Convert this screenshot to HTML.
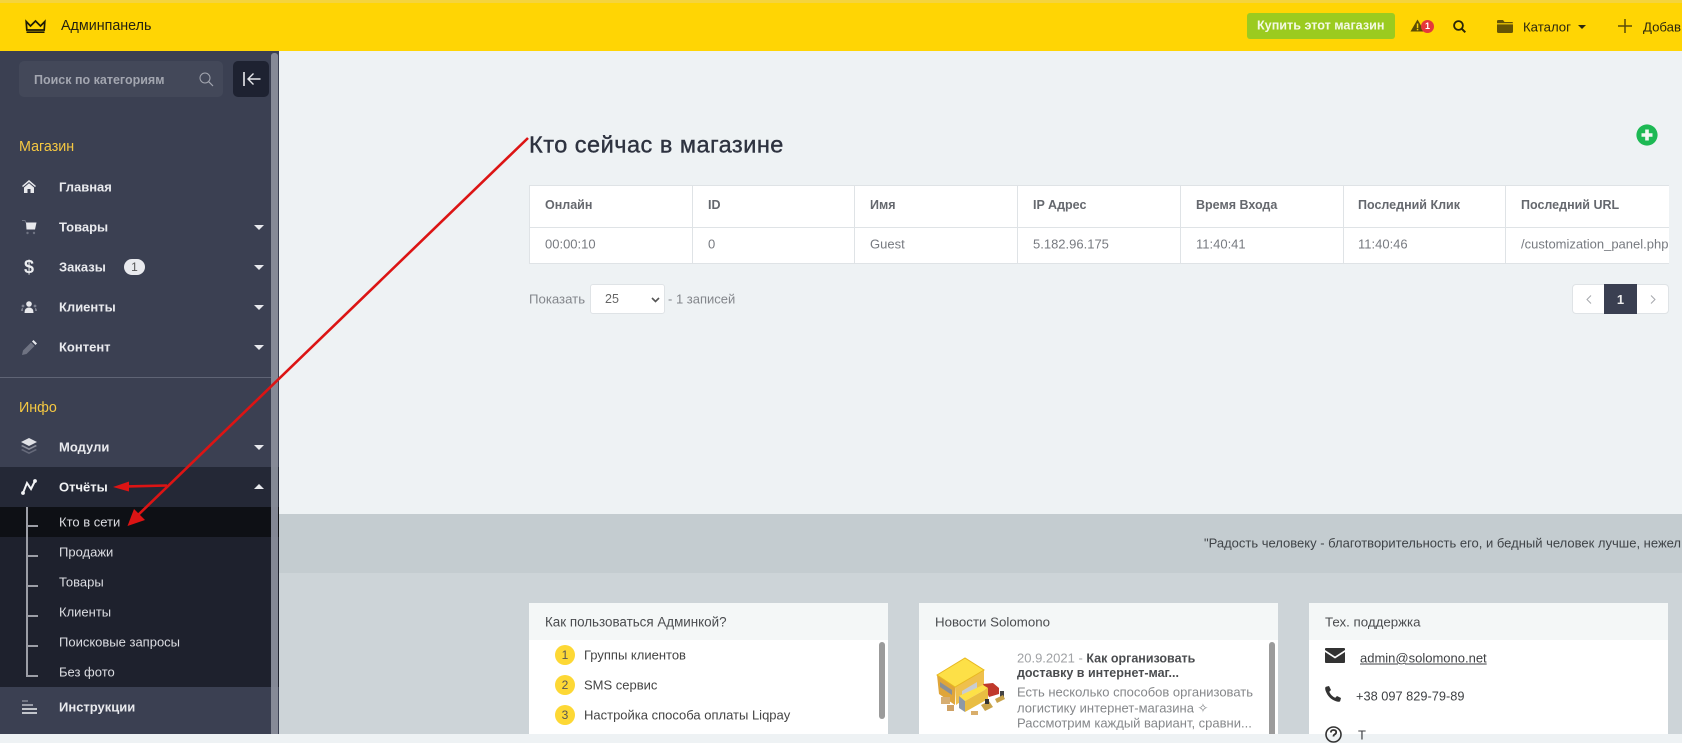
<!DOCTYPE html>
<html lang="ru"><head><meta charset="utf-8"><title>Кто сейчас в магазине</title>
<style>
*{box-sizing:border-box}
html,body{margin:0;padding:0}
body{width:1682px;height:734px;overflow:hidden;position:relative;background:#eef2f4;font-family:"Liberation Sans",sans-serif}
.a{position:absolute}
.t{position:absolute;white-space:nowrap;line-height:1;transform:translateY(-50%)}
.m{color:#e9eaee;font-weight:bold;font-size:13px;left:59px}
.s{color:#dcdde2;font-size:13px;left:59px}
.y{color:#f5c842;font-size:14.3px;left:19px}
.th{font-weight:bold;font-size:12.5px;color:#65686e;top:205px}
.td{font-size:13px;color:#777a80;top:244px}
.car{position:absolute;left:254px;width:0;height:0;border-left:5px solid transparent;border-right:5px solid transparent;border-top:5px solid #e8e9ed}
.card{position:absolute;top:603px;width:359px;height:131px;background:#fff}
.ch{position:absolute;left:0;top:0;right:0;height:37px;background:#f4f7f7}
.num{position:absolute;left:555px;width:20px;height:20px;border-radius:50%;background:#fdd835;color:#555;font-size:12px;line-height:20px;text-align:center}
.li{font-size:13px;color:#444;left:584px}
.tree{position:absolute;left:28px;width:10px;height:2px;background:#9c9ea6}
svg{position:absolute;overflow:visible}
</style></head><body>

<!-- top bar -->
<div class="a" style="left:0;top:0;width:1682px;height:51px;background:#ffd504"></div>
<div class="a" style="left:0;top:0;width:1682px;height:3px;background:#f4d43e"></div>
<svg style="left:25px;top:20px" width="21" height="13" viewBox="0 0 21 13"><path d="M1.2 1.5 L5.5 6 L10.5 1 L15.5 6 L19.8 1.5 L19.2 10 H1.8 Z" fill="none" stroke="#1d1a05" stroke-width="1.7"/><path d="M1.5 12.2H19.5" stroke="#1d1a05" stroke-width="1.6"/></svg>
<div class="t" style="left:61px;top:26px;font-size:14.3px;color:#262310">Админпанель</div>

<div class="a" style="left:1247px;top:13px;width:148px;height:26px;background:#9bcb1f;border-radius:3px"></div>
<div class="t" style="left:1257px;top:26px;font-size:12.6px;font-weight:bold;color:#f4f9e4">Купить этот магазин</div>
<svg style="left:1410px;top:19px" width="15" height="13" viewBox="0 0 15 13"><path d="M7.5 0.5 L14.5 12.5 H0.5 Z" fill="#5c4c05"/><rect x="6.8" y="4.5" width="1.5" height="4.5" fill="#ffd504"/><rect x="6.8" y="9.8" width="1.5" height="1.5" fill="#ffd504"/></svg>
<div class="a" style="left:1421px;top:20px;width:13px;height:13px;border-radius:50%;background:#e5383b;color:#fff;font-size:9px;font-weight:bold;line-height:13px;text-align:center">1</div>
<svg style="left:1453px;top:20px" width="13" height="13" viewBox="0 0 13 13"><circle cx="5.5" cy="5.5" r="4.4" fill="none" stroke="#2a2508" stroke-width="1.8"/><path d="M8.8 8.8 L12.3 12.3" stroke="#2a2508" stroke-width="2"/></svg>
<svg style="left:1497px;top:20px" width="16" height="13" viewBox="0 0 16 13"><path d="M0 1.2 Q0 0 1.2 0 H6 L7.5 2 H15 Q16 2 16 3 V3.2 H0 Z M0 4.4 H16 V11.5 Q16 13 14.5 13 H1.5 Q0 13 0 11.5 Z" fill="#655405"/></svg>
<div class="t" style="left:1523px;top:26.5px;font-size:13.2px;color:#2b2710">Каталог</div>
<div class="a" style="left:1578px;top:25px;width:0;height:0;border-left:4px solid transparent;border-right:4px solid transparent;border-top:4px solid #2b2710"></div>
<svg style="left:1618px;top:19px" width="14" height="14" viewBox="0 0 14 14"><path d="M7 0V14M0 7H14" stroke="#5a4c08" stroke-width="1.5"/></svg>
<div class="t" style="left:1643px;top:26.5px;font-size:13.2px;color:#2b2710">Добав</div>

<!-- sidebar -->
<div class="a" style="left:0;top:51px;width:279px;height:683px;background:#3b4052"></div>
<div class="a" style="left:19px;top:61px;width:204px;height:36px;background:#434859;border-radius:5px"></div>
<div class="t" style="left:34px;top:79.5px;font-size:12.5px;font-weight:bold;color:#a3a6b0">Поиск по категориям</div>
<svg style="left:199px;top:72px" width="15" height="15" viewBox="0 0 15 15"><circle cx="6" cy="6" r="5" fill="none" stroke="#a3a6b0" stroke-width="1"/><path d="M9.7 9.7 L14 14" stroke="#a3a6b0" stroke-width="1.2"/></svg>
<div class="a" style="left:233px;top:61px;width:36px;height:36px;background:#1e2231;border-radius:5px"></div>
<svg style="left:243px;top:72px" width="18" height="14" viewBox="0 0 18 14"><path d="M1 0V14" stroke="#e8e9ed" stroke-width="1.6"/><path d="M17.5 7H5M10.5 1.5 L5 7 L10.5 12.5" fill="none" stroke="#e8e9ed" stroke-width="1.4"/></svg>

<div class="t y" style="top:147px">Магазин</div>

<svg style="left:22px;top:180px" width="14" height="13" viewBox="0 0 14 13"><path d="M7 0 L14 6 L13 7 L7 2 L1 7 L0 6 Z M7 3.2 L12 7.5 V13 H8.5 V9 H5.5 V13 H2 V7.5 Z" fill="#e8e9ed"/></svg>
<div class="t m" style="top:187px">Главная</div>

<svg style="left:22px;top:220px" width="15" height="15" viewBox="0 0 15 15"><path d="M0 .5 H3 L4 3" stroke="#6f7382" fill="none"/><path d="M4 2.5 H14.5 L13 9.5 H4.5 Z" fill="#e8e9ed"/><circle cx="5.5" cy="13" r="1.2" fill="#6f7382"/><circle cx="12" cy="13" r="1.2" fill="#6f7382"/></svg>
<div class="t m" style="top:227px">Товары</div><div class="car" style="top:225px"></div>

<div class="t" style="left:24px;top:267px;font-size:18px;font-weight:bold;color:#eceef1">$</div>
<div class="t m" style="top:267px">Заказы</div>
<div class="a" style="left:124px;top:259px;width:21px;height:16px;border-radius:8px;background:#e9eaee;color:#555;font-size:12px;line-height:16px;text-align:center">1</div>
<div class="car" style="top:265px"></div>

<svg style="left:21px;top:301px" width="16" height="13" viewBox="0 0 16 13"><circle cx="8" cy="3" r="2.8" fill="#e8e9ed"/><path d="M3.5 12 Q3.5 6.5 8 6.5 Q12.5 6.5 12.5 12 Z" fill="#e8e9ed"/><circle cx="2" cy="5" r="1.4" fill="#7d8190"/><circle cx="14" cy="5" r="1.4" fill="#7d8190"/><path d="M0 10 Q0 7 2 7 V10 Z M16 10 Q16 7 14 7 V10Z" fill="#7d8190"/></svg>
<div class="t m" style="top:307px">Клиенты</div><div class="car" style="top:305px"></div>

<svg style="left:22px;top:340px" width="15" height="15" viewBox="0 0 15 15"><path d="M0 15 L1 10.5 L9 2.5 L12.5 6 L4.5 14 Z" fill="#6f7382"/><path d="M10 1.5 L11.5 0 L15 3.5 L13.5 5 Z" fill="#e8e9ed"/></svg>
<div class="t m" style="top:347px">Контент</div><div class="car" style="top:345px"></div>

<div class="a" style="left:0;top:377px;width:271px;height:1px;background:#5f6475"></div>
<div class="t y" style="top:408px">Инфо</div>

<svg style="left:21px;top:438px" width="16" height="16" viewBox="0 0 16 16"><path d="M8 0 L16 4 L8 8 L0 4 Z" fill="#e0e1e6"/><path d="M1.5 7 L8 10.3 L14.5 7 L16 8 L8 12 L0 8 Z" fill="#8b8e9b"/><path d="M1.5 11 L8 14.3 L14.5 11 L16 12 L8 16 L0 12 Z" fill="#666a7a"/></svg>
<div class="t m" style="top:447px">Модули</div><div class="car" style="top:445px"></div>

<!-- reports -->
<div class="a" style="left:0;top:467px;width:279px;height:40px;background:#242836"></div>
<svg style="left:21px;top:479px" width="16" height="16" viewBox="0 0 16 16"><path d="M2 14 L6 4 L10 10 L14 2" fill="none" stroke="#f2f3f5" stroke-width="2"/><circle cx="2" cy="14" r="1.9" fill="#f2f3f5"/><circle cx="14" cy="2" r="1.9" fill="#f2f3f5"/></svg>
<div class="t m" style="top:487px;color:#f2f3f5">Отчёты</div>
<div class="a" style="left:254px;top:484px;width:0;height:0;border-left:5px solid transparent;border-right:5px solid transparent;border-bottom:5px solid #e8e9ed"></div>

<div class="a" style="left:0;top:507px;width:279px;height:180px;background:#1e212d"></div>
<div class="a" style="left:0;top:507px;width:279px;height:30px;background:#0e1015"></div>
<div class="a" style="left:26px;top:507px;width:2px;height:170px;background:#9c9ea6"></div>
<div class="tree" style="top:525px"></div><div class="tree" style="top:555px"></div><div class="tree" style="top:585px"></div><div class="tree" style="top:615px"></div><div class="tree" style="top:645px"></div><div class="tree" style="top:675px"></div>
<div class="t s" style="top:522px">Кто в сети</div>
<div class="t s" style="top:552px">Продажи</div>
<div class="t s" style="top:582px">Товары</div>
<div class="t s" style="top:612px">Клиенты</div>
<div class="t s" style="top:642px">Поисковые запросы</div>
<div class="t s" style="top:672px">Без фото</div>

<svg style="left:22px;top:700px" width="15" height="14" viewBox="0 0 15 14"><path d="M0 1H6" stroke="#8b8e9b" stroke-width="1.4"/><path d="M0 5H11" stroke="#c5c7cf" stroke-width="1.4"/><path d="M0 9H15M0 13H15" stroke="#f0f1f3" stroke-width="1.4"/></svg>
<div class="t m" style="top:707px">Инструкции</div>

<div class="a" style="left:271px;top:53px;width:7px;height:681px;background:#8a8e9b;border-radius:3px 3px 0 0;opacity:.95"></div>

<!-- title -->
<div class="t" style="left:529px;top:145px;font-size:23.5px;letter-spacing:.5px;color:#2e3340;-webkit-text-stroke:.4px #2e3340">Кто сейчас в магазине</div>
<svg style="left:1636px;top:124px" width="22" height="22" viewBox="0 0 22 22"><circle cx="11" cy="11" r="10.6" fill="#1db954"/><path d="M11 5.5V16.5M5.5 11H16.5" stroke="#f2f8f4" stroke-width="3.6"/></svg>

<!-- table -->
<div class="a" style="left:529px;top:185px;width:1140px;height:79px;background:#fff;border:1px solid #dfe3e6;border-right:0"></div>
<div class="a" style="left:529px;top:227px;width:1140px;height:1px;background:#dfe3e6"></div>
<div class="a" style="left:692px;top:185px;width:1px;height:79px;background:#dfe3e6"></div>
<div class="a" style="left:854px;top:185px;width:1px;height:79px;background:#dfe3e6"></div>
<div class="a" style="left:1017px;top:185px;width:1px;height:79px;background:#dfe3e6"></div>
<div class="a" style="left:1180px;top:185px;width:1px;height:79px;background:#dfe3e6"></div>
<div class="a" style="left:1343px;top:185px;width:1px;height:79px;background:#dfe3e6"></div>
<div class="a" style="left:1505px;top:185px;width:1px;height:79px;background:#dfe3e6"></div>
<div class="t th" style="left:545px">Онлайн</div>
<div class="t th" style="left:708px">ID</div>
<div class="t th" style="left:870px">Имя</div>
<div class="t th" style="left:1033px">IP Адрес</div>
<div class="t th" style="left:1196px">Время Входа</div>
<div class="t th" style="left:1358px">Последний Клик</div>
<div class="t th" style="left:1521px">Последний URL</div>
<div class="t td" style="left:545px">00:00:10</div>
<div class="t td" style="left:708px">0</div>
<div class="t td" style="left:870px">Guest</div>
<div class="t td" style="left:1033px">5.182.96.175</div>
<div class="t td" style="left:1196px">11:40:41</div>
<div class="t td" style="left:1358px">11:40:46</div>
<div class="a" style="left:1506px;top:228px;width:163px;height:35px;overflow:hidden"><div class="t td" style="left:15px;top:16px">/customization_panel.php</div></div>

<!-- show -->
<div class="t" style="left:529px;top:299px;font-size:13.2px;color:#83868b">Показать</div>
<div class="a" style="left:590px;top:284px;width:75px;height:30px;background:#fff;border:1px solid #dfe3e6;border-radius:3px"></div>
<div class="t" style="left:605px;top:299px;font-size:12.5px;color:#666">25</div>
<svg style="left:651px;top:297px" width="9" height="6" viewBox="0 0 9 6"><path d="M1 1 L4.5 4.5 L8 1" fill="none" stroke="#555" stroke-width="1.6"/></svg>
<div class="t" style="left:668px;top:299px;font-size:13px;color:#83868b">- 1 записей</div>

<!-- pagination -->
<div class="a" style="left:1572px;top:284px;width:97px;height:30px;background:#fff;border:1px solid #dfe3e6;border-radius:4px"></div>
<div class="a" style="left:1604px;top:284px;width:33px;height:30px;background:#3a3f51;color:#eee;font-size:13px;font-weight:bold;line-height:31px;text-align:center">1</div>
<svg style="left:1586px;top:295px" width="6" height="9" viewBox="0 0 6 9"><path d="M5 .5 L1 4.5 L5 8.5" fill="none" stroke="#a5a8ad"/></svg>
<svg style="left:1650px;top:295px" width="6" height="9" viewBox="0 0 6 9"><path d="M1 .5 L5 4.5 L1 8.5" fill="none" stroke="#a5a8ad"/></svg>

<!-- bottom -->
<div class="a" style="left:279px;top:514px;width:1403px;height:59px;background:#c4ccd0"></div>
<div class="a" style="left:279px;top:573px;width:1403px;height:161px;background:#cdd4d8"></div>
<div class="t" style="left:1204px;top:543px;font-size:13px;color:#3f4347">"Радость человеку - благотворительность его, и бедный человек лучше, нежел</div>

<!-- card 1 -->
<div class="card" style="left:529px"><div class="ch"></div><div class="a" style="left:350px;top:39px;width:6px;height:77px;background:#9b9b9b;border-radius:3px"></div></div>
<div class="t" style="left:545px;top:622px;font-size:13.4px;color:#4a4c4f">Как пользоваться Админкой?</div>
<div class="num" style="top:645px">1</div><div class="t li" style="top:655px">Группы клиентов</div>
<div class="num" style="top:675px">2</div><div class="t li" style="top:685px">SMS сервис</div>
<div class="num" style="top:705px">3</div><div class="t li" style="top:715px">Настройка способа оплаты Liqpay</div>

<!-- card 2 -->
<div class="card" style="left:919px"><div class="ch"></div><div class="a" style="left:350px;top:39px;width:6px;height:92px;background:#9b9b9b;border-radius:3px 3px 0 0"></div></div>
<div class="t" style="left:935px;top:622px;font-size:13.3px;color:#4a4c4f">Новости Solomono</div>
<svg style="left:935px;top:655px" width="72" height="60" viewBox="0 0 72 60">
<path d="M2 20 L20 32 V50 L4 39 Z" fill="#dfa53a"/>
<path d="M20 32 L49 15 V30 L21 50 Z" fill="#efc04c"/>
<path d="M5 27 L17 35 V40 L5 32 Z" fill="#8a8f95"/>
<path d="M27 36 L42 27 V34 L27 43 Z" fill="#c9ccd0"/>
<path d="M2 20 L30 3 L49 15 L20 32 Z" fill="#fde047" stroke="#e8b820" stroke-width="1"/>
<path d="M48 29 L58 28 L64 33 V39 L54 42 Z" fill="#c0392b"/>
<path d="M24 41 L48 30 L53 33 L30 46 Z" fill="#fde047"/>
<path d="M30 46 L53 33 V44 L30 57 Z" fill="#e9bd42"/>
<path d="M24 41 L30 46 V57 L24 53 Z" fill="#8d99a6"/>
<rect x="6" y="42" width="9" height="7" fill="#d7ae72"/><rect x="12" y="50" width="7" height="6" fill="#cfa265"/>
<rect x="36" y="56" width="7" height="4" fill="#d9ae6b"/><path d="M46 50 L54 46 L58 52 L50 56 Z" fill="#c9a34a"/><rect x="50" y="44" width="4" height="5" fill="#333"/>
<rect x="65" y="36" width="4" height="8" fill="#444"/><path d="M60 44 L68 40 L70 44 L62 48 Z" fill="#c9a34a"/>
</svg>
<div class="t" style="left:1017px;top:658px;font-size:13px;color:#a0a2a5">20.9.2021 - <b style="color:#4a4c4f;font-size:12.5px">Как организовать</b></div>
<div class="t" style="left:1017px;top:673px;font-size:12.5px;font-weight:bold;color:#4a4c4f">доставку в интернет-маг...</div>
<div class="t" style="left:1017px;top:692px;font-size:13px;color:#85878a">Есть несколько способов организовать</div>
<div class="t" style="left:1017px;top:708px;font-size:13px;color:#85878a">логистику интернет-магазина ✧</div>
<div class="t" style="left:1017px;top:723px;font-size:13px;color:#85878a">Рассмотрим каждый вариант, сравни...</div>

<!-- card 3 -->
<div class="card" style="left:1309px"><div class="ch"></div></div>
<div class="t" style="left:1325px;top:622px;font-size:13.3px;color:#4a4c4f">Тех. поддержка</div>
<svg style="left:1325px;top:648px" width="20" height="15" viewBox="0 0 20 15"><path d="M1 0 H19 Q20 0 20 1 V2 L10 8.5 L0 2 V1 Q0 0 1 0 Z M0 4 L10 10.5 L20 4 V14 Q20 15 19 15 H1 Q0 15 0 14 Z" fill="#333"/></svg>
<div class="t" style="left:1360px;top:658px;font-size:13px;color:#3f4144;text-decoration:underline">admin@solomono.net</div>
<svg style="left:1325px;top:686px" width="16" height="16" viewBox="0 0 16 16"><path d="M1 .8 L4 0 L6 4 L4.3 5.7 C5 8 8 11 10.3 11.7 L12 10 L16 12 L15.2 15 C14.8 16 13 16 11 15.3 C6 13.5 2.5 10 .7 5 C0 3 0 1.2 1 .8 Z" fill="#333"/></svg>
<div class="t" style="left:1356px;top:697px;font-size:12.8px;color:#3f4144">+38 097 829-79-89</div>
<svg style="left:1325px;top:726px" width="17" height="17" viewBox="0 0 17 17"><circle cx="8.5" cy="8.5" r="7.5" fill="none" stroke="#333" stroke-width="1.6"/><path d="M5.8 6.5 Q6 4 8.5 4 Q11.2 4 11.2 6.3 Q11.2 7.8 9.5 8.5 Q8.5 9 8.5 10.5" fill="none" stroke="#333" stroke-width="1.8"/></svg>
<div class="t" style="left:1358px;top:735px;font-size:13px;color:#3f4144">Т</div>

<!-- red arrows -->
<svg style="left:0;top:0" width="1682" height="734" viewBox="0 0 1682 734">
<path d="M528 138 L136 517" stroke="#dc1414" stroke-width="2.6" fill="none"/>
<path d="M127.5 526 L134 509 L145 520 Z" fill="#dc1414"/>
<path d="M167 485.5 L125 486.5" stroke="#dc1414" stroke-width="2.6" fill="none"/>
<path d="M113 487 L129 481.5 V491.5 Z" fill="#dc1414"/>
</svg>
</body></html>
